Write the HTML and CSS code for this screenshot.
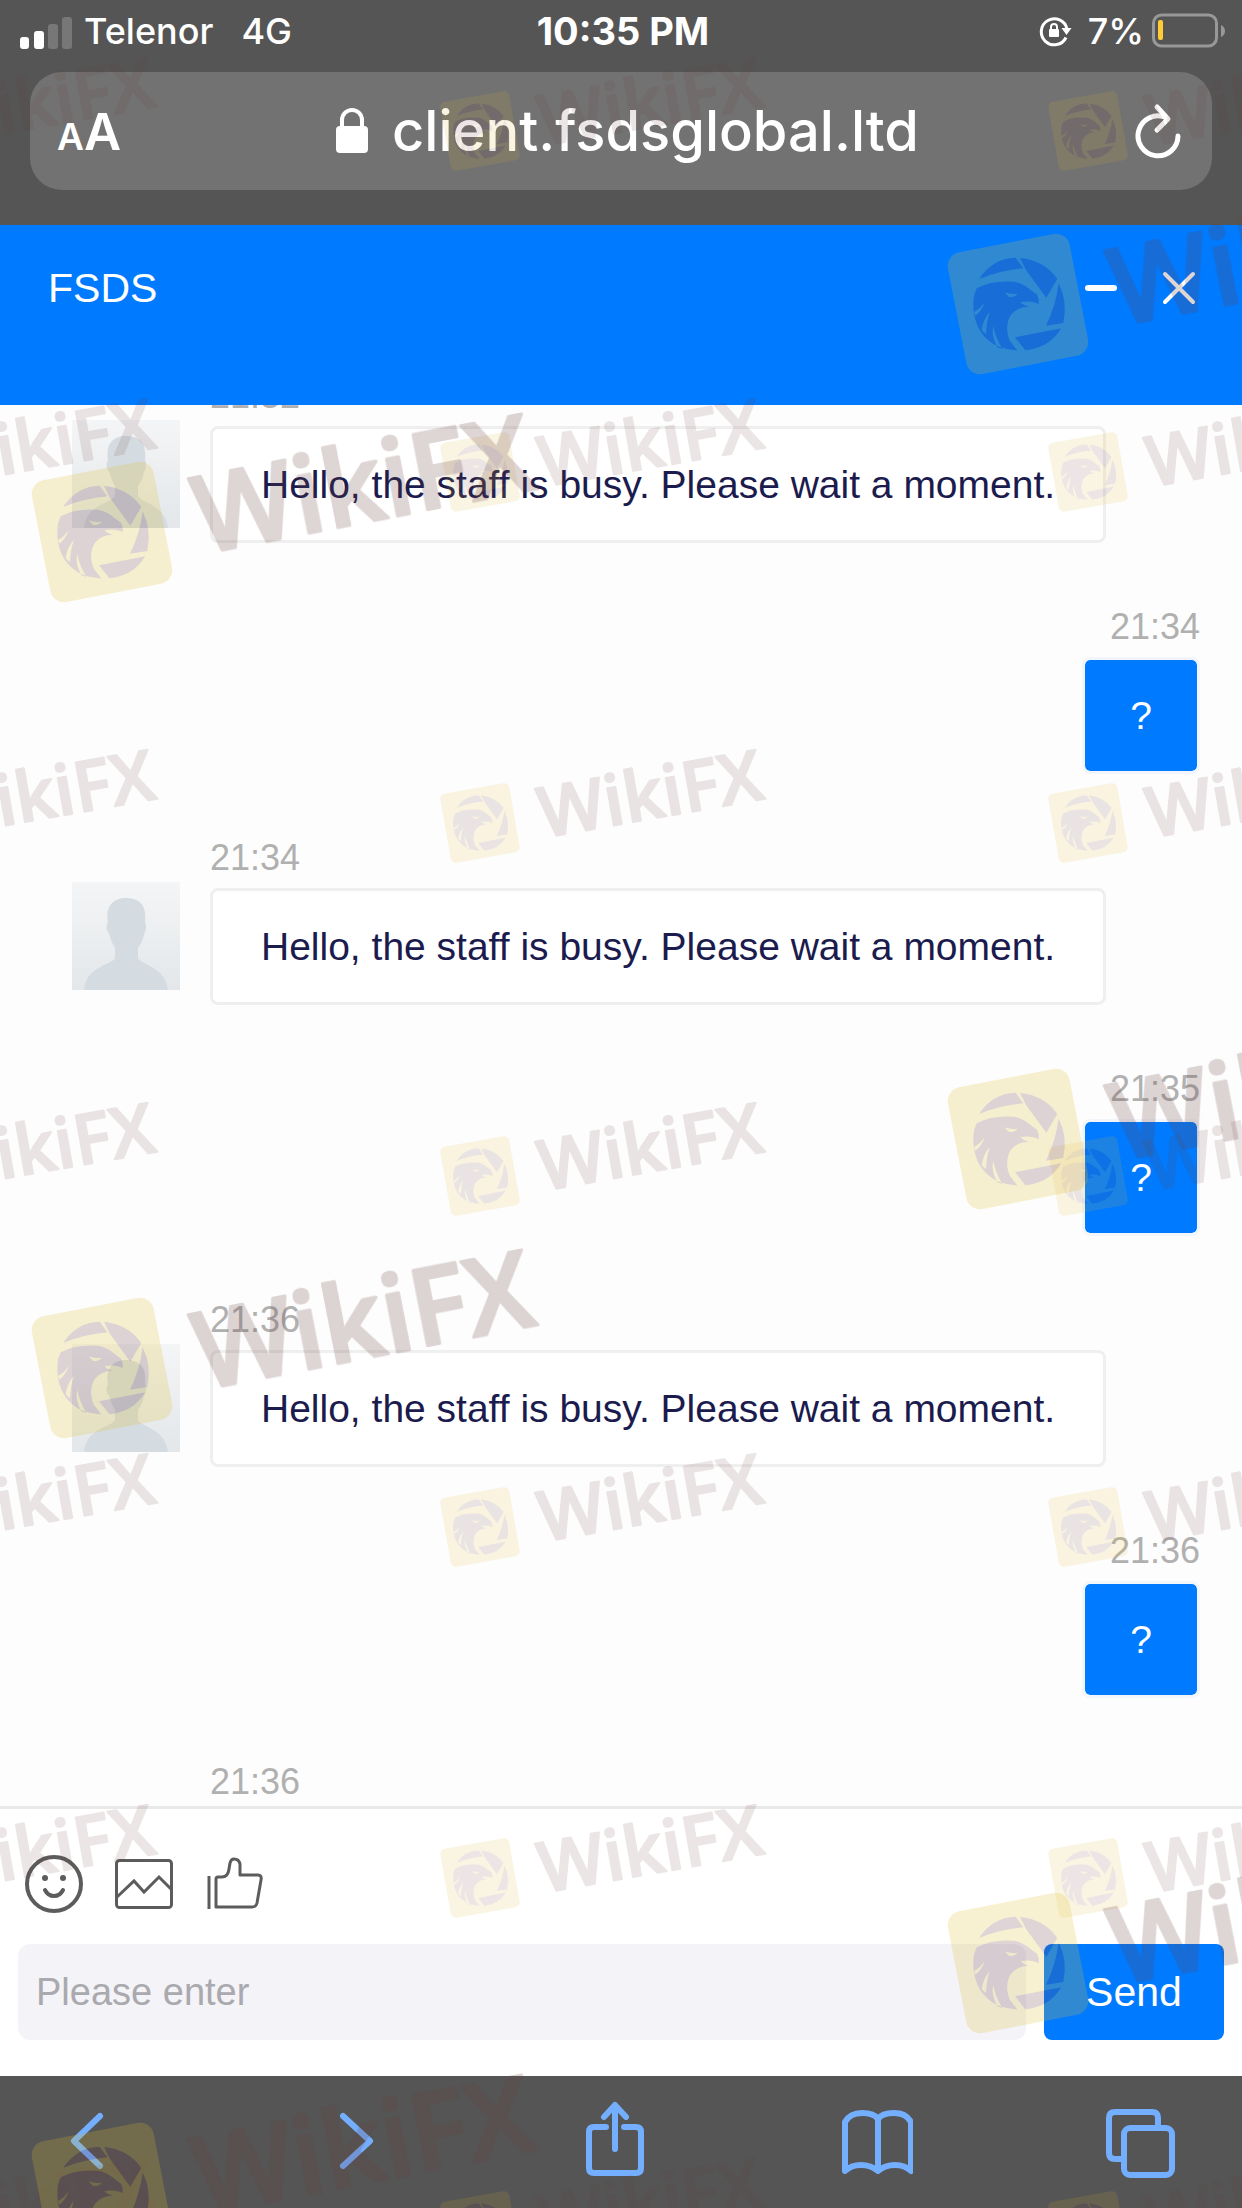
FILE: index.html
```html
<!DOCTYPE html>
<html lang="en">
<head>
<meta charset="utf-8">
<meta name="viewport" content="width=device-width, initial-scale=1">
<title>FSDS</title>
<link rel="stylesheet" href="styles.css">
</head>
<body>
<header class="browser-top">
  <div class="status">
    <div class="status-left">
      <svg class="signal" width="52" height="40" viewBox="0 0 52 40" aria-hidden="true">
        <rect x="0" y="26" width="9" height="12" rx="3" fill="#fff"/>
        <rect x="14" y="20" width="10" height="18" rx="3" fill="#fff"/>
        <rect x="28" y="13" width="10" height="25" rx="3" fill="#777"/>
        <rect x="42" y="6" width="10" height="32" rx="3" fill="#777"/>
      </svg>
      <span class="carrier">Telenor</span>
      <span>4G</span>
    </div>
    <time class="clock">10:35 PM</time>
    <div class="status-right">
      <svg width="33" height="32" viewBox="0 0 33 32" fill="none" stroke="#fff" stroke-width="3" aria-hidden="true">
        <path d="M27 22.500A13 13 0 1 1 28 14"/>
        <path d="M22.500 13h10l-5 7z" fill="#fff" stroke="none"/>
        <rect x="10" y="14" width="10" height="8" rx="1" fill="#fff" stroke="none"/>
        <path d="M12 15v-3a3 3 0 0 1 6 0v3" stroke-width="2"/>
      </svg>
      <span class="charge">7%</span>
      <svg width="74" height="36" viewBox="0 0 74 36" aria-hidden="true">
        <rect x="1.500" y="2" width="63" height="31" rx="8" fill="none" stroke="#989898" stroke-width="3"/>
        <rect x="6" y="7" width="5" height="20" rx="2" fill="#fc3"/>
        <path d="M69 12q4 2 4 6t-4 6z" fill="#989898"/>
      </svg>
    </div>
  </div>
  <div class="address">
    <button class="plain text-size" type="button" aria-label="Text size"><span class="small-a">A</span><span class="big-a">A</span></button>
    <div class="site">
      <svg width="32" height="46" viewBox="0 0 32 46" aria-hidden="true">
        <rect x="0" y="18" width="32" height="27" rx="4" fill="#fff"/>
        <path d="M6 20v-8a10 10 0 0 1 20 0v8" fill="none" stroke="#fff" stroke-width="4"/>
      </svg>
      <span>client.fsdsglobal.ltd</span>
    </div>
    <button class="plain reload" type="button" aria-label="Reload">
      <svg width="48" height="58" viewBox="0 0 48 58" fill="none" stroke="#fff" stroke-width="5" stroke-linecap="round" stroke-linejoin="round">
        <path d="M44 34A20 20 0 1 1 32 15.500"/>
        <path d="M23 5l11 12-11 11"/>
      </svg>
    </button>
  </div>
</header>

<main class="chat-window">
  <div class="chat-head">
    <h1 class="chat-title">FSDS</h1>
    <div class="head-actions">
      <button class="plain" type="button" aria-label="Minimize">
        <svg width="36" height="36" viewBox="0 0 36 36" stroke="#fff" stroke-width="6" stroke-linecap="round"><path d="M5 18h26"/></svg>
      </button>
      <button class="plain" type="button" aria-label="Close">
        <svg width="36" height="36" viewBox="0 0 36 36" stroke="#fff" stroke-width="4" stroke-linecap="round"><path d="M4 4l28 28M32 4L4 32"/></svg>
      </button>
    </div>
  </div>

  <div class="messages">
    <article class="message">
      <time class="time">21:32</time>
      <svg class="avatar" viewBox="0 0 108 108" aria-hidden="true"><use href="#person"/></svg>
      <p class="bubble">Hello, the staff is busy. Please wait a moment.</p>
    </article>
    <article class="message mine">
      <time class="time">21:34</time>
      <p class="bubble">?</p>
    </article>
    <article class="message">
      <time class="time">21:34</time>
      <svg class="avatar" viewBox="0 0 108 108" aria-hidden="true"><use href="#person"/></svg>
      <p class="bubble">Hello, the staff is busy. Please wait a moment.</p>
    </article>
    <article class="message mine">
      <time class="time">21:35</time>
      <p class="bubble">?</p>
    </article>
    <article class="message">
      <time class="time">21:36</time>
      <svg class="avatar" viewBox="0 0 108 108" aria-hidden="true"><use href="#person"/></svg>
      <p class="bubble">Hello, the staff is busy. Please wait a moment.</p>
    </article>
    <article class="message mine">
      <time class="time">21:36</time>
      <p class="bubble">?</p>
    </article>
    <article class="message">
      <time class="time">21:36</time>
    </article>
  </div>

  <form class="composer">
    <div class="tools">
      <button class="plain" type="button" aria-label="Emoji">
        <svg width="58" height="58" viewBox="0 0 58 58" fill="none" stroke="#5c5c5c" stroke-width="4" stroke-linecap="round">
          <circle cx="29" cy="29" r="27"/>
          <path d="M20 35q3 6 9 6t9-6"/>
          <circle cx="20" cy="23" r="3" fill="#5c5c5c" stroke="none"/><circle cx="38" cy="23" r="3" fill="#5c5c5c" stroke="none"/>
        </svg>
      </button>
      <button class="plain" type="button" aria-label="Picture">
        <svg width="58" height="58" viewBox="0 0 58 58" fill="none" stroke="#5c5c5c" stroke-width="3">
          <rect x="1.500" y="5.500" width="55" height="47" rx="3"/>
          <path d="M2 42l17-16 10 11 15-15 12 12"/>
        </svg>
      </button>
      <button class="plain" type="button" aria-label="Like">
        <svg width="58" height="58" viewBox="0 0 58 58" fill="none" stroke="#5c5c5c" stroke-width="3" stroke-linejoin="round">
          <path d="M4 21v33"/>
          <path d="M11 52V24q0-2 2-2h4q6 0 7-8l1-6q1-4 4-4 5 0 6 5v11h18q4 0 3 5l-4 23q-1 4-5 4H14q-3 0-3-2z"/>
        </svg>
      </button>
    </div>
    <div class="entry">
      <input class="field" type="text" placeholder="Please enter" aria-label="Message">
      <button class="send" type="submit">Send</button>
    </div>
  </form>
</main>

<nav class="browser-bottom" aria-label="Browser">
  <button class="plain" type="button" aria-label="Back">
    <svg width="72" height="80" viewBox="0 0 72 80"><path d="M49 16L23 41l26 25"/></svg>
  </button>
  <button class="plain" type="button" aria-label="Forward">
    <svg width="72" height="80" viewBox="0 0 72 80"><path d="M29 16l27 25-27 25"/></svg>
  </button>
  <button class="plain" type="button" aria-label="Share">
    <svg width="72" height="80" viewBox="0 0 72 80"><path d="M28 27H16q-5 0-5 5v36q0 5 5 5h42q5 0 5-5V32q0-5-5-5H46M37 49V7M26 17L37 5l11 12"/></svg>
  </button>
  <button class="plain" type="button" aria-label="Bookmarks">
    <svg width="72" height="80" viewBox="0 0 72 80"><path d="M37 19Q33 13 21 13T4 22v49q6-6 16-6t17 6q7-6 17-6t16 6V22Q65 13 53 13t-16 6zv51"/></svg>
  </button>
  <button class="plain" type="button" aria-label="Tabs">
    <svg width="72" height="80" viewBox="0 0 72 80"><path d="M17 59H11q-6 0-6-6V18q0-6 6-6h37q6 0 6 6v8"/><rect x="20" y="28" width="48" height="47" rx="6"/></svg>
  </button>
</nav>

<svg class="watermark" aria-hidden="true">
  <defs>
    <linearGradient id="avatar-bg" x1="0" y1="0" x2="0" y2="1">
      <stop offset="0" stop-color="#f4f5f6"/><stop offset="1" stop-color="#e3e7ea"/>
    </linearGradient>
    <g id="person">
      <rect width="108" height="108" fill="url(#avatar-bg)"/>
      <path d="M43 66c-3-5-5-10-6-15-3-1-3-8-1-11-3-15 5-24 17-24 14 0 22 6 20 24 2 3 1 10-1 12-1 6-3 10-6 14v10c3 7 27 8 30 32H12c2-24 28-25 31-32z" fill="#d5dce1"/>
    </g>
    <g id="eagle">
      <g transform="scale(.333)">
        <g transform="translate(-352 -297)" fill="#6e4048" fill-rule="evenodd">
          <path d="M235 222Q275 160 345 158L368 190Q300 196 235 222z"/>
          <path d="M358 159Q430 165 470 222L437 278 376 195z"/>
          <path d="M474 235Q502 290 488 354L436 362Q465 305 474 235z"/>
          <path d="M343 397L482 370Q445 430 374 436z"/>
          <path d="M228 250Q270 225 340 230C375 236 395 262 408 268Q416 280 414 298 395 286 360 291 365 300 385 305 350 306 332 328C314 352 318 388 328 408L350 437Q290 432 262 405C225 375 212 320 220 270zM312 262Q330 270 352 266 340 278 325 276zM220 322Q240 310 252 292 242 320 224 332zM243 376Q248 340 268 320 257 348 256 388zM290 427Q270 390 278 362 283 395 305 432z"/>
        </g>
      </g>
    </g>
    <g id="mark-small" opacity=".13">
      <rect x="-35" y="-35" width="70" height="70" rx="5" transform="rotate(-10)" fill="#e0b828"/>
      <use href="#eagle" transform="scale(.6)"/>
      <text class="brand brand-small" transform="translate(63 15) rotate(-10)">WikiFX</text>
    </g>
    <g id="mark-large" opacity=".22">
      <rect x="-62" y="-62" width="124" height="124" rx="14" transform="rotate(-11)" fill="#e0bf30"/>
      <use href="#eagle"/>
      <text class="brand brand-large" transform="translate(100 22) rotate(-11)">WikiFX</text>
    </g>
    <g id="mark-row">
      <use href="#mark-small" x="-128"/><use href="#mark-small" x="480"/><use href="#mark-small" x="1088"/>
    </g>
  </defs>
  <use href="#mark-row" y="131"/>
  <use href="#mark-row" y="472"/>
  <use href="#mark-row" y="823"/>
  <use href="#mark-row" y="1176"/>
  <use href="#mark-row" y="1527"/>
  <use href="#mark-row" y="1878"/>
  <use href="#mark-row" y="2231"/>
  <use href="#mark-large" x="1018" y="304"/>
  <use href="#mark-large" x="102" y="532"/>
  <use href="#mark-large" x="1018" y="1139"/>
  <use href="#mark-large" x="102" y="1368"/>
  <use href="#mark-large" x="1018" y="1963"/>
  <use href="#mark-large" x="102" y="2193"/>
</svg>
</body>
</html>
```
FILE: styles.css
```css
* {
  box-sizing: border-box;
}

body {
  position: relative;
  display: flex;
  flex-direction: column;
  height: 100vh;
  margin: 0;
  overflow: hidden;
  background: #fff;
  font-family: "Liberation Sans", Arial, sans-serif;
}

svg {
  display: block;
  flex: none;
}

.plain {
  display: block;
  padding: 0;
  border: 0;
  background: none;
  color: inherit;
  font: inherit;
}

/* Browser chrome, top */
.browser-top {
  padding: 0 30px 35px;
  background: #555;
  color: #fff;
  font-family: Inter, sans-serif;
}

.status {
  display: grid;
  grid-template-columns: 1fr auto 1fr;
  align-items: center;
  height: 72px;
  padding-bottom: 10px;
  margin: 0 -14px 0 -10px;
  font-size: 36px;
  font-weight: 500;
  line-height: 40px;
}

.status-left,
.status-right {
  display: flex;
  align-items: center;
}

.status-right {
  justify-content: flex-end;
}

.carrier {
  margin: 0 28px 0 12px;
}

.clock {
  font-size: 38px;
  font-weight: 700;
}

.charge {
  margin: 0 8px 0 16px;
}

.address {
  display: flex;
  align-items: center;
  justify-content: space-between;
  height: 118px;
  padding: 0 30px 0 27px;
  border-radius: 32px;
  background: #727272;
}

.text-size {
  font-weight: 600;
}

.small-a {
  font-size: 37px;
}

.big-a {
  font-size: 51px;
}

.site {
  display: flex;
  align-items: center;
  gap: 24px;
  font-size: 56px;
  font-weight: 500;
}

/* Chat */
.chat-window {
  display: flex;
  flex: 1;
  flex-direction: column;
  min-height: 0;
}

.chat-head {
  display: flex;
  align-items: flex-start;
  justify-content: space-between;
  height: 180px;
  padding: 39px 45px 0 48px;
  background: #007aff;
  color: #fff;
}

.chat-title {
  margin: 0;
  font-size: 41px;
  font-weight: 400;
  line-height: 48px;
}

.head-actions {
  display: flex;
  gap: 42px;
  padding-top: 6px;
}

.messages {
  display: flex;
  flex: 1;
  flex-direction: column;
  justify-content: flex-end;
  min-height: 0;
  padding: 0 42px 0 72px;
  overflow: hidden;
  background: #fdfdfd;
}

.message {
  display: grid;
  flex: none;
  grid-template-columns: 108px auto;
  justify-content: start;
  justify-items: start;
  column-gap: 30px;
  margin-bottom: 60px;
}

.message:last-child {
  margin-bottom: 0;
}

.time {
  grid-column: 2;
  color: #b0b0b0;
  font-size: 36px;
  line-height: 48px;
}

.avatar {
  width: 108px;
  height: 108px;
}

.bubble {
  margin: 6px 0 0;
  padding: 33px 48px;
  border: 3px solid #efefef;
  border-radius: 8px;
  background: #fff;
  color: #1b1b4e;
  font-size: 39px;
  line-height: 45px;
}

.mine {
  grid-template-columns: auto;
  justify-content: end;
  justify-items: end;
}

.mine .time {
  grid-column: 1;
}

.mine .bubble {
  padding: 33px 45px;
  border-color: #f2f6fb;
  background: #007aff;
  background-clip: padding-box;
  color: #fff;
}

/* Composer */
.composer {
  display: flex;
  flex-direction: column;
  gap: 31px;
  padding: 46px 18px 36px;
  border-top: 3px solid #e9e9e9;
}

.tools {
  display: flex;
  gap: 32px;
  padding-left: 7px;
}

.entry {
  display: flex;
  gap: 18px;
}

.field {
  flex: 1;
  min-width: 0;
  height: 96px;
  padding: 0 18px;
  border: 0;
  border-radius: 12px;
  background: #f3f3f8;
  color: #1b1b4e;
  font: 38px "Liberation Sans", Arial, sans-serif;
}

.field::placeholder {
  color: #a9a9ae;
}

.send {
  width: 180px;
  border: 0;
  border-radius: 8px;
  background: #007aff;
  color: #fff;
  font: 41px "Liberation Sans", Arial, sans-serif;
}

/* Browser chrome, bottom */
.browser-bottom {
  display: flex;
  align-items: flex-start;
  justify-content: space-between;
  height: 132px;
  padding: 24px 66px 0 51px;
  background: #555;
}

.browser-bottom svg {
  fill: none;
  stroke: #74aeff;
  stroke-width: 6;
  stroke-linecap: round;
  stroke-linejoin: round;
}

/* Overlay marks across the whole screen */
.watermark {
  position: absolute;
  inset: 0;
  width: 100%;
  height: 100%;
  pointer-events: none;
}

.brand {
  fill: #6b3f40;
  stroke: #6b3f40;
  stroke-linejoin: round;
  font-family: "Open Sans", "Noto Sans", sans-serif;
  font-weight: 600;
}

.brand-small {
  stroke-width: 2px;
  font-size: 70px;
}

.brand-large {
  stroke-width: 3px;
  font-size: 106px;
}
```
